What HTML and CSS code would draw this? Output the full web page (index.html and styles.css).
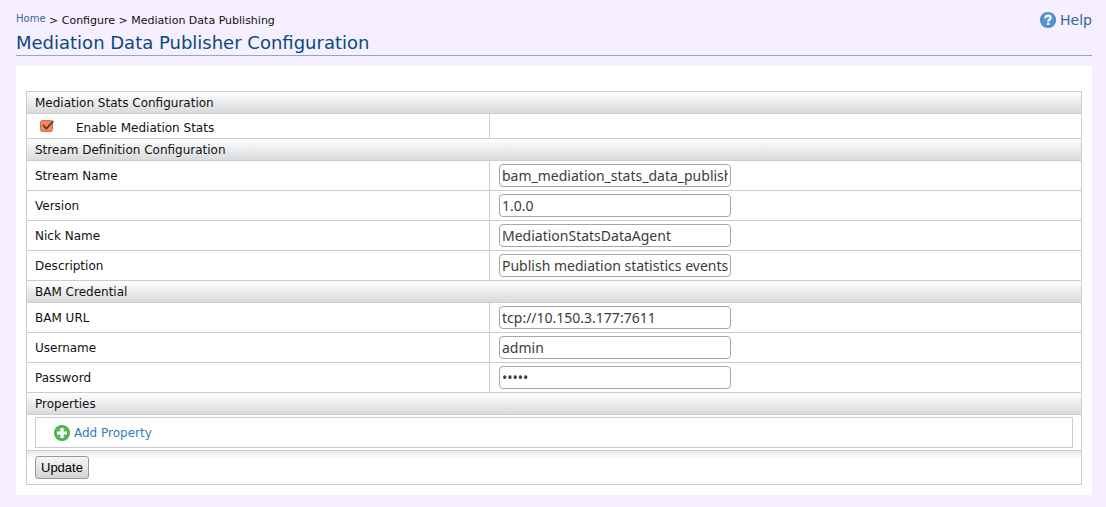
FILE: index.html
```html
<!DOCTYPE html>
<html lang="en">
<head>
<meta charset="utf-8">
<title>Mediation Data Publisher Configuration</title>
<link rel="stylesheet" href="styles.css">
</head>
<body>
<header class="page-header">
  <nav class="breadcrumb" aria-label="Breadcrumb"><a class="home" href="#">Home</a> &gt; Configure &gt; Mediation Data Publishing</nav>
  <a class="help" href="#">
    <svg class="icon" viewBox="0 0 16 16" aria-hidden="true">
      <circle cx="8" cy="8" r="8" fill="#4388c8"/>
      <circle cx="8" cy="8" r="6.7" fill="#5796d0"/>
      <path d="M5.3 6.2C5.4 4.3 6.6 3.6 8.1 3.6c1.6 0 2.6.9 2.6 2.2 0 1.9-2.5 1.9-2.5 3.9" fill="none" stroke="#fff" stroke-width="2.1"/>
      <rect x="7.1" y="10.8" width="2.2" height="2.2" fill="#fff"/>
    </svg>
    <span>Help</span>
  </a>
</header>
<h1 class="title">Mediation Data Publisher Configuration</h1>
<main class="panel">
  <form>
    <table class="config">
      <colgroup><col class="label-col"><col></colgroup>
      <tbody>
        <tr class="section"><th colspan="2">Mediation Stats Configuration</th></tr>
        <tr class="enable">
          <td><div class="check-row"><input class="check" type="checkbox" id="enable" checked><label for="enable">Enable Mediation Stats</label></div></td>
          <td></td>
        </tr>
        <tr class="section"><th colspan="2">Stream Definition Configuration</th></tr>
        <tr class="field"><td><label for="stream">Stream Name</label></td><td><input class="text" id="stream" type="text" value="bam_mediation_stats_data_publisher"></td></tr>
        <tr class="field"><td><label for="version">Version</label></td><td><input class="text" id="version" type="text" value="1.0.0"></td></tr>
        <tr class="field"><td><label for="nick">Nick Name</label></td><td><input class="text" id="nick" type="text" value="MediationStatsDataAgent"></td></tr>
        <tr class="field"><td><label for="desc">Description</label></td><td><input class="text" id="desc" type="text" value="Publish mediation statistics events"></td></tr>
        <tr class="section"><th colspan="2">BAM Credential</th></tr>
        <tr class="field"><td><label for="url">BAM URL</label></td><td><input class="text" id="url" type="text" value="tcp://10.150.3.177:7611"></td></tr>
        <tr class="field"><td><label for="user">Username</label></td><td><input class="text" id="user" type="text" value="admin"></td></tr>
        <tr class="field"><td><label for="pass">Password</label></td><td><input class="text" id="pass" type="password" value="admin"></td></tr>
        <tr class="section"><th colspan="2">Properties</th></tr>
        <tr class="properties"><td colspan="2">
          <div class="property-box"><a class="add" href="#">
            <svg class="icon" viewBox="0 0 16 16" aria-hidden="true">
              <circle cx="8" cy="8" r="8" fill="#45ad43"/>
              <circle cx="8" cy="8" r="6.8" fill="#5aba54"/>
              <path d="M8 3v10M3 8h10" stroke="#fff" stroke-width="3.2"/>
            </svg>
            <span>Add Property</span></a></div>
        </td></tr>
        <tr class="actions"><td colspan="2"><button class="update" type="button">Update</button></td></tr>
      </tbody>
    </table>
  </form>
</main>
</body>
</html>
```

FILE: styles.css
```css
* { box-sizing: border-box; }
body {
  margin: 0;
  padding: 12px 14px 12px 16px;
  background: #f5efff;
  color: #111;
  font: 12px/16px "DejaVu Sans", sans-serif;
}
a { color: #386698; text-decoration: none; }
.icon { width: 16px; height: 16px; flex: none; }
.page-header { display: flex; justify-content: space-between; height: 19px; }
.breadcrumb { font-size: 11px; line-height: 17px; }
.home { font-size: 10px; vertical-align: top; line-height: 14px; }
.help { display: flex; align-items: center; gap: 4px; height: 16px; font-size: 14px; }
.title {
  margin: 0 0 10px;
  padding-bottom: 1px;
  border-bottom: 1px solid #94a5c8;
  color: #0c4a7c;
  font-size: 18px;
  font-weight: 400;
  line-height: 23px;
}
.panel { padding: 25px 10px 10px; background: #fff; }
.config { width: 100%; border-collapse: collapse; table-layout: fixed; border: 1px solid #ccc; }
.label-col { width: 463px; }
.config th, .config td {
  border: 1px solid #ccc;
  padding: 0 8px;
  background-clip: padding-box;
  background-repeat: no-repeat;
  text-align: left;
  font-weight: 400;
}
.section th { height: 22px; background-image: linear-gradient(#fff, #d8dadb); }
.enable td { height: 25px; }
.check-row { display: flex; gap: 21px; padding: 4px 0 0 5px; }
.check {
  appearance: none;
  width: 15px;
  height: 14px;
  margin: 0;
  background: url("data:image/svg+xml,%3Csvg xmlns='http://www.w3.org/2000/svg' viewBox='0 0 15 14'%3E%3Crect x='.5' y='.5' width='12' height='11' rx='2' fill='%23f4895f' stroke='%23cf6b45'/%3E%3Cpath d='M3 5l3.3 3.7L13.3 1' fill='none' stroke='%23583a30' stroke-width='1.8'/%3E%3C/svg%3E") no-repeat;
}
.field td { height: 30px; }
.config .field td + td { padding-left: 9px; }
.text {
  display: block;
  width: 232px;
  height: 23px;
  padding: 0 2px;
  border: 1px solid #aaa5a1;
  border-radius: 4px;
  background: #fff;
  color: #3c3c3c;
  font: 14px "Noto Sans", sans-serif;
}
.config .properties td { height: 36px; padding: 2px 8px; }
.property-box { padding: 7px 18px 6px; border: 1px solid #ccc; }
.add { display: flex; align-items: center; gap: 4px; width: max-content; color: #2f7dc0; }
.actions td { height: 34px; background-image: linear-gradient(#eaeaea, #fff 8px); }
.update {
  display: block;
  height: 23px;
  padding: 0 5px;
  border: 1px solid #999;
  border-radius: 3px;
  background: linear-gradient(#f6f6f6, #d4d4d4);
  color: #000;
  font: 13px "Liberation Sans", sans-serif;
}
```
